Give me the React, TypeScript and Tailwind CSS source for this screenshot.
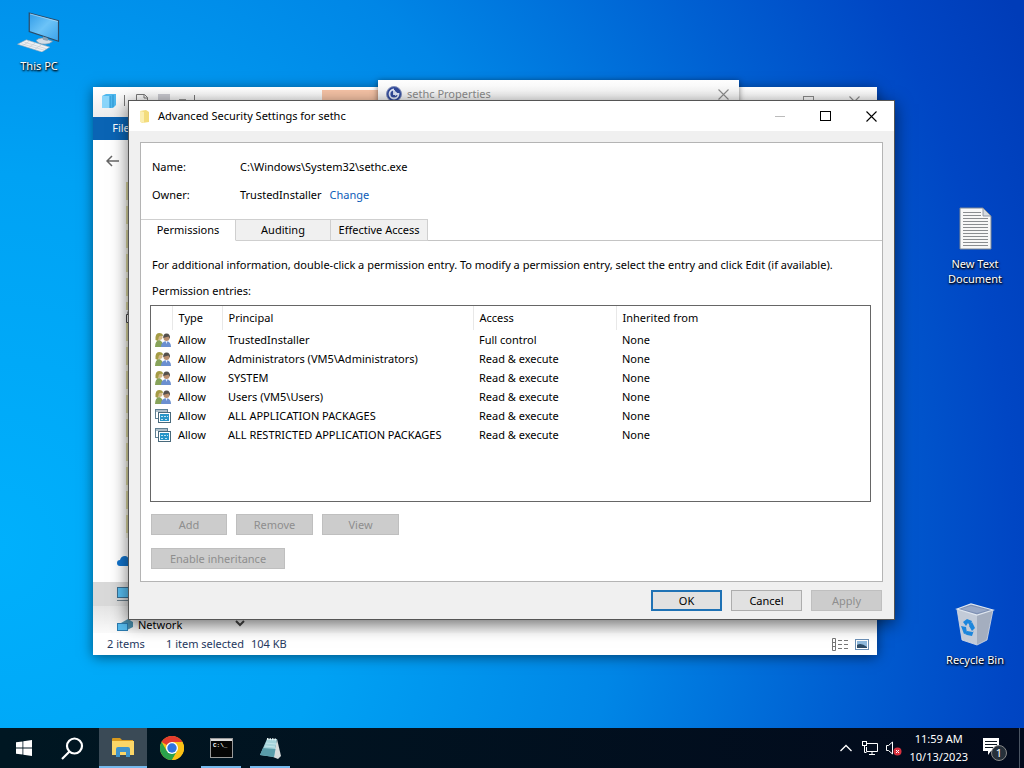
import { ReactNode, useState } from 'react';
import clsx from 'clsx';

type Entry = {
  kind: 'group' | 'package';
  type: string;
  principal: string;
  access: string;
  inherited: string;
};

const entries: Entry[] = [
  { kind: 'group', type: 'Allow', principal: 'TrustedInstaller', access: 'Full control', inherited: 'None' },
  { kind: 'group', type: 'Allow', principal: 'Administrators (VM5\\Administrators)', access: 'Read & execute', inherited: 'None' },
  { kind: 'group', type: 'Allow', principal: 'SYSTEM', access: 'Read & execute', inherited: 'None' },
  { kind: 'group', type: 'Allow', principal: 'Users (VM5\\Users)', access: 'Read & execute', inherited: 'None' },
  { kind: 'package', type: 'Allow', principal: 'ALL APPLICATION PACKAGES', access: 'Read & execute', inherited: 'None' },
  { kind: 'package', type: 'Allow', principal: 'ALL RESTRICTED APPLICATION PACKAGES', access: 'Read & execute', inherited: 'None' },
];

const tabs = [
  { name: 'Permissions', width: 'w-[95px]' },
  { name: 'Auditing', width: 'w-[95px]' },
  { name: 'Effective Access', width: 'w-[97px]' },
];

/* ---------- icons ---------- */

const PcIcon = () => (
  <svg width="44" height="40" viewBox="0 0 44 41">
    <defs>
      <linearGradient id="pcScreen" x1="0" y1="0" x2="1" y2="1">
        <stop offset="0" stopColor="#2f9be8" />
        <stop offset="0.5" stopColor="#6cc3f7" />
        <stop offset="1" stopColor="#3aa2ea" />
      </linearGradient>
    </defs>
    <path d="M12 1 42 9v21L12 20Z" fill="url(#pcScreen)" stroke="#2c4a66" strokeWidth="1.2" />
    <path d="M12.8 2 41.4 9.7" stroke="#b9e2fb" strokeWidth="0.7" />
    <path d="M19 29q5-4 11-1l6 2q-3 3-8 3-7 0-9-4Z" fill="#d3dde6" stroke="#7390a8" strokeWidth="0.7" />
    <path d="m26 25 5 1.600v3l-5-1.200Z" fill="#8aa2b5" />
    <path d="M0 33 9 28.500l24 7.500-8 5Z" fill="#eef1f4" stroke="#9aa9b6" strokeWidth="0.6" />
    <path d="m4 32.500 23 6.500M7 31l22 6.500M12 30l-6 4M18 32l-6 4M24 34l-6 4" stroke="#bcc5cd" strokeWidth="0.6" fill="none" />
  </svg>
);

const TextFileIcon = () => (
  <svg width="33" height="43" viewBox="0 0 33 43">
    <path d="M1 1h23l8 8v33H1Z" fill="#f7f7f7" stroke="#7d8794" />
    <path d="M24 1v8h8Z" fill="#d5dae0" stroke="#7d8794" strokeWidth="0.8" />
    <path
      d="M4 5.500h18M4 8.500h18M4 11.500h25M4 14.500h25M4 17.500h25M4 20.500h25M4 23.500h25M4 26.500h25M4 29.500h25M4 32.500h25M4 35.500h25M4 38.500h25"
      stroke="#8a8d90"
    />
  </svg>
);

const RecycleIcon = () => (
  <svg width="40" height="43" viewBox="0 0 40 43">
    <path d="m2 6 5 31 15 5V11Z" fill="#c3cbd8" />
    <path d="M22 11v31l10-5 6-30Z" fill="#a4aebf" />
    <path d="m2 6 14-5 22 6-16 5Z" fill="#7f91b4" stroke="#dfe6ef" strokeWidth="1.2" />
    <path d="m6 6 10-3 17 4-11 3Z" fill="#98a8c6" />
    <g fill="#1c86dc">
      <path d="m8 19 4-3 5 2-2 5-2-3-2 3Z" />
      <path d="m17 19 3 6-3 3-3-5Z" />
      <path d="m6 23 5 1 1 6-3 1Z" />
      <path d="m12 28 6 1 1-2-2 6-5-1-2-1Z" />
    </g>
    <path d="m2 6 5 31 15 5 10-5 6-30" fill="none" stroke="#d5dce6" strokeWidth="0.8" />
  </svg>
);

const GroupIcon = () => (
  <svg width="16" height="16" viewBox="0 0 16 16" className="block">
    <path d="M0 15q0-6 4-7 4 1 4.500 7Z" fill="#87a35a" />
    <circle cx="4.500" cy="5" r="3" fill="#d4b988" />
    <path d="M.5 8Q0 1 4 1t4 3Q5 3 3.800 5L3 9Z" fill="#a59c45" />
    <path d="M6 15q0-5 5-6 5 .5 5 6Z" fill="#6b8fd0" />
    <circle cx="11.500" cy="6" r="3" fill="#b98f70" />
    <path d="M8.200 6Q8 1.500 11.500 1.500 15.500 1.500 15 7l-1.500-2.500q-3 .5-5.300 1.500Z" fill="#54504c" />
    <path d="m10.500 9 1 3 1-3" fill="#e8eefa" />
  </svg>
);

const PackageIcon = () => (
  <svg width="16" height="16" viewBox="0 0 16 16" className="block">
    <rect x="0.500" y="1.500" width="12" height="9" fill="#fff" stroke="#5e7f92" />
    <path d="M1 3h11" stroke="#5e7f92" />
    <rect x="3.500" y="4.500" width="12" height="10" fill="#fff" stroke="#49697b" />
    <rect x="5" y="6" width="9" height="7" fill="#2795c8" />
    <path d="M6 8.500h7M6 11.500h3M10 11.500h3" stroke="#bfe4f4" strokeDasharray="2 1" />
  </svg>
);

const FolderIcon = () => (
  <svg width="9" height="13" viewBox="0 0 9 13">
    <path d="M0 1 6 0l3 2v10l-7 1-2-2Z" fill="#f3dc7c" />
    <path d="m0 1 4 1v11l-4-1Z" fill="#fbeeb0" />
  </svg>
);

const CloseIcon = () => (
  <svg width="11" height="11" viewBox="0 0 11 11">
    <path d="m.5.5 10 10M10.500.5l-10 10" stroke="currentColor" strokeWidth="1.100" />
  </svg>
);

const MaximizeIcon = () => (
  <svg width="11" height="11" viewBox="0 0 11 11">
    <rect x="0.500" y="0.500" width="10" height="9" fill="none" stroke="currentColor" />
  </svg>
);

const ChromeIcon = () => (
  <svg width="24" height="24" viewBox="0 0 24 24">
    <circle cx="12" cy="12" r="12" fill="#fbc116" />
    <path d="M12 12 1.600 6A12 12 0 0 1 22.400 6H12Z" fill="#e33b2e" />
    <path d="M1.600 6A12 12 0 0 0 12 24l5.200-9L12 12 6.800 15Z" fill="#2ba24c" />
    <path d="M12 6h10.400A12 12 0 0 1 12 24l5.200-9Z" fill="#fbc116" />
    <circle cx="12" cy="12" r="6" fill="#fff" />
    <circle cx="12" cy="12" r="4.700" fill="#2e74e0" />
  </svg>
);

/* ---------- desktop ---------- */

const Shortcut = ({ label, className, children }: { label: string; className: string; children: ReactNode }) => (
  <button
    className={clsx(
      'absolute flex w-[76px] flex-col items-center gap-1.5 leading-[15px] text-white [text-shadow:0_1px_2px_#000,1px_1px_2px_#000]',
      className
    )}
  >
    {children}
    <span>{label}</span>
  </button>
);

const Explorer = () => (
  <section className="absolute top-[87px] right-[147px] bottom-[73px] left-[93px] flex flex-col overflow-hidden bg-white shadow-[0_2px_12px_rgba(0,0,0,0.5)]">
    <header className="flex h-[30px] shrink-0 items-start bg-linear-to-b from-white to-[#ececec] pl-2 text-[#8a8a8a]">
      <svg width="16" height="16" viewBox="0 0 16 16" className="mt-1.5">
        <path d="m1 3 4-2h10v11l-3 3H1Z" fill="#4fb8ee" />
        <path d="M1 3h8v12H1Z" fill="#8ad5fa" />
        <path d="M9 3v12M12 2v12" stroke="#2b93d0" />
      </svg>
      <svg width="80" height="20" viewBox="0 0 80 20" className="ml-[7px]" fill="none">
        <path d="M.5 8v11M70.500 8v11" stroke="#777" />
        <path d="M12.500 19V7.500h8l3 3V19M20 7.500V11h4" stroke="#777" />
        <rect x="34" y="7" width="12" height="10" fill="#c9c9cf" />
        <path d="M55 13.500h7" stroke="#333" strokeWidth="2" />
      </svg>
      <div className="mt-[3px] ml-[118px] h-[27px] w-20 bg-[#f6c3a6]" />
      <div className="mt-[9px] mr-[17px] ml-auto flex gap-[35px]">
        <button aria-label="Maximize folder window"><MaximizeIcon /></button>
        <button aria-label="Close folder window"><CloseIcon /></button>
      </div>
    </header>
    <nav className="flex h-[23px] shrink-0 items-center">
      <button className="h-full w-14 bg-[#0a64b4] text-white">File</button>
    </nav>
    <div className="flex h-[42px] shrink-0 items-center pl-[13px]">
      <button aria-label="Back">
        <svg width="13" height="12" viewBox="0 0 13 12" fill="none" stroke="#666" strokeWidth="1.500">
          <path d="M6 1 1 6l5 5M1 6h12" />
        </svg>
      </button>
    </div>
    <div className="flex min-h-0 flex-1 flex-col justify-end overflow-hidden">
      <div className="ml-[33px] h-32 w-1 bg-[repeating-linear-gradient(#d9d5a0_0_18px,#f4f2e0_18px_24px)]" />
      <svg width="10" height="13" viewBox="0 0 10 13" className="ml-8" fill="none" stroke="#444">
        <path d="M1.500 4.500h7v8h-7ZM3 4V1.500h4V4" />
      </svg>
      <div className="ml-[33px] w-1 flex-1 bg-[repeating-linear-gradient(#d9d5a0_0_18px,#f4f2e0_18px_24px)]" />
      <div className="flex h-11 items-center pl-6">
        <svg width="16" height="11" viewBox="0 0 16 11">
          <path d="M3 11a3 3 0 0 1 0-6q1-4 5-4 3 0 4 4 4 0 4 3t-3 3Z" fill="#1173cc" />
        </svg>
      </div>
      <div className="flex h-6 items-center bg-[#d9d9d9] pl-6">
        <svg width="16" height="15" viewBox="0 0 16 15">
          <rect x="0.500" y="0.500" width="15" height="10" fill="#58bdf0" stroke="#3c6f90" />
          <path d="M0 13.500h16" stroke="#6b7d89" />
        </svg>
      </div>
      <div className="flex h-[27px] items-end bg-linear-to-b from-[#e4e4e4] to-[#fafafa] pl-6 leading-4">
        <svg width="16" height="14" viewBox="0 0 16 14" className="mr-[5px]">
          <path d="m4 4 7-4 5 3v5l-6 3Z" fill="#4a8fae" />
          <rect x="0.500" y="4.500" width="10" height="7" fill="#58bdf0" stroke="#2a7bb0" />
        </svg>
        <span className="w-[97px]">Network</span>
        <svg width="10" height="16" viewBox="0 0 10 16" fill="none" stroke="#444" strokeWidth="2">
          <path d="m1 4 4 4 4-4" />
        </svg>
      </div>
    </div>
    <footer className="flex h-[22px] shrink-0 items-center pr-2 pl-3.5 text-[#26385e]">
      <span className="w-[59px]">2 items</span>
      <span className="w-[85px]">1 item selected</span>
      <span>104 KB</span>
      <button aria-label="Details view" className="mr-[7px] ml-auto">
        <svg width="16" height="13" viewBox="0 0 16 13" fill="none" stroke="#777">
          <path d="M.5.5h3v12h-3ZM.5 4.500h3M.5 8.500h3M6 2.500h4M12 2.500h4M6 6.500h4M12 6.500h4M6 10.500h4M12 10.500h4" />
        </svg>
      </button>
      <button aria-label="Thumbnail view">
        <svg width="14" height="11" viewBox="0 0 14 11">
          <rect x="0.500" y="0.500" width="13" height="10" fill="#fff" stroke="#6a8fb5" />
          <rect x="2" y="2" width="10" height="7" fill="#8fb9dc" />
          <path d="M2 6q4-3 10 2v1H2Z" fill="#2d4b66" />
        </svg>
      </button>
    </footer>
  </section>
);

const Properties = () => (
  <section className="absolute top-20 right-[285px] left-[378px] h-64 bg-linear-to-b from-white to-[#ececec] to-10% shadow-[0_1px_6px_rgba(0,0,0,0.5)]">
    <header className="flex items-center gap-[5px] pt-1.5 pr-2.5 pl-2 text-[#8b8b8b]">
      <svg width="16" height="16" viewBox="0 0 16 16">
        <circle cx="8" cy="8" r="7.500" fill="#314a9b" stroke="#8492bd" />
        <path d="M8 3.500a4.500 4.500 0 1 0 4.500 4.500H8V4" fill="none" stroke="#dfe6f7" strokeWidth="1.800" />
        <path d="m9 5 3.500 3-3.500 2Z" fill="#dfe6f7" />
      </svg>
      <h2>sethc Properties</h2>
      <button aria-label="Close properties" className="ml-auto"><CloseIcon /></button>
    </header>
  </section>
);

/* ---------- dialog ---------- */

const PushButton = ({ children, className, disabled }: { children: ReactNode; className: string; disabled?: boolean }) => (
  <button
    disabled={disabled}
    className={clsx(
      'h-[21px] leading-4',
      disabled ? 'border border-[#bfbfbf] bg-[#cccccc] text-[#8e8e8e]' : 'bg-[#e1e1e1]',
      className
    )}
  >
    {children}
  </button>
);

const SecurityDialog = () => {
  const [tab, setTab] = useState('Permissions');

  return (
    <section className="absolute top-[100px] right-[129px] left-32 border border-[#555] bg-[#f0f0f0] shadow-[0_4px_16px_rgba(0,0,0,0.55)]">
      <header className="flex h-[30px] items-center bg-white pr-[17px] pl-[11px]">
        <FolderIcon />
        <h1 className="ml-[9px]">Advanced Security Settings for sethc</h1>
        <div className="ml-auto flex items-center gap-[35px]">
          <button aria-label="Minimize" disabled className="h-px w-2.5 bg-[#bbb]" />
          <button aria-label="Maximize"><MaximizeIcon /></button>
          <button aria-label="Close"><CloseIcon /></button>
        </div>
      </header>

      <div className="mx-[11px] mt-[11px] border border-[#b4b4b4] bg-white pb-3">
        <dl className="grid grid-cols-[88px_1fr] gap-y-3 pt-4 pl-[11px] leading-4">
          <dt>Name:</dt>
          <dd>C:\Windows\System32\sethc.exe</dd>
          <dt>Owner:</dt>
          <dd>
            TrustedInstaller
            <a href="#change" className="ml-2 text-[#0b5cb8]">Change</a>
          </dd>
        </dl>

        <div role="tablist" className="mt-4 flex h-[22px] border-b border-[#c4c4c4]">
          {tabs.map(({ name, width }) => (
            <button
              key={name}
              role="tab"
              aria-selected={tab === name}
              onClick={() => setTab(name)}
              className={clsx(
                'h-[22px] border-t border-r border-b border-[#cfcfcf] leading-4 whitespace-nowrap',
                width,
                tab === name ? 'border-b-white bg-white' : 'bg-[#f0f0f0]'
              )}
            >
              {name}
            </button>
          ))}
        </div>

        <div className="pr-[11px] pl-[9px]">
          <p className="mt-4 pl-0.5 leading-4">
            For additional information, double-click a permission entry. To modify a permission entry, select the entry
            and click Edit (if available).
          </p>
          <p id="entries-label" className="mt-2.5 pl-0.5 leading-4">Permission entries:</p>

          <div className="mt-1.5 h-[197px] border border-[#666]">
            <table aria-labelledby="entries-label" className="w-full table-fixed text-left">
              <colgroup>
                <col className="w-[21px]" />
                <col className="w-[50px]" />
                <col className="w-[251px]" />
                <col className="w-[143px]" />
                <col />
              </colgroup>
              <thead>
                <tr className="h-6 [&>th]:border-r [&>th]:border-[#e8e8e8] [&>th]:pl-1.5 [&>th]:font-normal [&>th:last-child]:border-r-0">
                  <th aria-label="Icon" />
                  <th>Type</th>
                  <th>Principal</th>
                  <th>Access</th>
                  <th>Inherited from</th>
                </tr>
              </thead>
              <tbody>
                {entries.map((entry) => (
                  <tr key={entry.principal} className="h-[19px] leading-4 whitespace-nowrap">
                    <td className="pl-1">{entry.kind === 'group' ? <GroupIcon /> : <PackageIcon />}</td>
                    <td className="pl-1.5">{entry.type}</td>
                    <td className="pl-1.5">{entry.principal}</td>
                    <td className="pl-1.5">{entry.access}</td>
                    <td className="pl-1.5">{entry.inherited}</td>
                  </tr>
                ))}
              </tbody>
            </table>
          </div>

          <div className="mt-3 flex gap-[9px] pl-px">
            <PushButton disabled className="w-[76px]">Add</PushButton>
            <PushButton disabled className="w-[77px]">Remove</PushButton>
            <PushButton disabled className="w-[77px]">View</PushButton>
          </div>
          <div className="mt-[13px] flex pl-px">
            <PushButton disabled className="w-[134px]">Enable inheritance</PushButton>
          </div>
        </div>
      </div>

      <footer className="flex justify-end gap-[9px] pt-2 pr-3 pb-2">
        <PushButton className="w-[71px] border-2 border-[#1f72b5]">OK</PushButton>
        <PushButton className="w-[71px] border border-[#adadad]">Cancel</PushButton>
        <PushButton disabled className="w-[71px]">Apply</PushButton>
      </footer>
    </section>
  );
};

/* ---------- taskbar ---------- */

const Taskbar = () => (
  <footer className="flex h-10 shrink-0 items-stretch bg-linear-to-r from-[#001722] to-[#020a1c] text-white">
    <button aria-label="Start" className="flex w-12 items-center justify-center">
      <svg width="16" height="16" viewBox="0 0 16 16" fill="#fff">
        <path d="m0 2.300 6.500-.9v6.200H0ZM7.300 1.300 16 0v7.600H7.300ZM0 8.400h6.500v6.200L0 13.700ZM7.300 8.400H16V16l-8.700-1.300Z" />
      </svg>
    </button>
    <button aria-label="Search" className="mr-[3px] flex w-12 items-center justify-center">
      <svg width="23" height="23" viewBox="0 0 23 23" fill="none" stroke="#fff" strokeWidth="2.200">
        <circle cx="13.500" cy="9" r="7.500" />
        <path d="m8.500 14.500-7.500 7.500" />
      </svg>
    </button>
    <button aria-label="File Explorer" className="flex w-12 items-center justify-center border-b-2 border-[#76b9ed] bg-[#3a4a56]">
      <svg width="22" height="20" viewBox="0 0 22 20">
        <path d="M0 2q0-1 1-1h7l2 2h11v5H0Z" fill="#d99a1e" />
        <path d="M0 4h22v14H0Z" fill="#fbd667" />
        <path d="M4 20v-8q0-2 2-2h10q2 0 2 2v8h-4v-5H8v5Z" fill="#3f93cb" />
      </svg>
    </button>
    <button aria-label="Chrome" className="ml-px flex w-12 items-center justify-center">
      <ChromeIcon />
    </button>
    <button aria-label="Command Prompt" className="mt-0.5 mr-1 ml-[5px] flex w-10 items-center justify-center border-b-2 border-[#76b9ed]">
      <svg width="23" height="20" viewBox="0 0 23 20">
        <rect x="0.500" y="0.500" width="22" height="19" fill="#050505" stroke="#9a9a9a" />
        <path d="M1 2h21" stroke="#dcdcdc" strokeWidth="2" />
        <text x="3" y="9" fontSize="6" fontWeight="bold" fill="#fff" fontFamily="Liberation Mono, monospace">C:\_</text>
      </svg>
    </button>
    <button aria-label="Notepad" className="mt-0.5 ml-[5px] flex w-10 items-center justify-center border-b-2 border-[#76b9ed]">
      <svg width="23" height="22" viewBox="0 0 23 22">
        <path d="m18 2 4 17-3 3-5-2Z" fill="#d9dcdc" />
        <path d="M8 2h10l-3 18-14-2Z" fill="#a5d3da" />
        <path d="M4 11 16.500 12 15 20 1 18Z" fill="#5a9daa" />
        <path d="m8 2 10 .5" stroke="#e9f4f5" strokeWidth="2" strokeDasharray="1.500 1" />
        <path d="m7 6 10 1M6 9l10 1" stroke="#c9e8ee" strokeWidth="0.800" />
      </svg>
    </button>

    <div className="ml-auto flex items-center">
      <button aria-label="Show hidden icons" className="mr-2.5">
        <svg width="12" height="8" viewBox="0 0 12 8" fill="none" stroke="#fff" strokeWidth="1.300">
          <path d="m.5 7 5.500-5.500L11.500 7" />
        </svg>
      </button>
      <button aria-label="Network status" className="mr-2">
        <svg width="16" height="14" viewBox="0 0 16 14" fill="none" stroke="#fff">
          <path d="M5 2.500h10.500v8H4.500V6M10 10.500v3M7 13.500h6" />
          <rect x="0.500" y="0.500" width="4" height="4" />
          <path d="M2.500 5v6.500h2" />
        </svg>
      </button>
      <button aria-label="Volume muted" className="mr-[7px]">
        <svg width="16" height="15" viewBox="0 0 16 15">
          <path d="M.5 4.500h2L6.500 1v12l-4-3.500h-2Z" fill="none" stroke="#fff" />
          <circle cx="11.500" cy="10.500" r="4" fill="#d9303e" />
          <path d="m10 9 3 3m0-3-3 3" stroke="#fff" />
        </svg>
      </button>
      <time dateTime="2023-10-13T11:59" className="text-center leading-[18px]">
        11:59 AM
        <br />
        10/13/2023
      </time>
      <button aria-label="Notifications" className="relative mr-3 ml-3.5">
        <svg width="25" height="26" viewBox="0 0 25 26">
          <path d="M1 3h16v13H9l-3 4v-4H1Z" fill="#fff" />
          <path d="M3 6.500h12M3 9.500h12M3 12.500h8" stroke="#0b1620" />
        </svg>
        <span className="absolute right-0 bottom-0 flex size-4 items-center justify-center rounded-full border border-[#888] bg-[#26303a]">
          1
        </span>
      </button>
      <div className="mr-1 h-10 w-px bg-[#4b5563]" />
    </div>
  </footer>
);

const App = () => (
  <div className="flex min-h-screen flex-col bg-[#0040c4] font-['Noto_Sans','Open_Sans',sans-serif] text-[11px] text-black">
    <main className="relative flex-1 bg-[radial-gradient(ellipse_110%_170%_at_0%_75%,#00b0fc_0%,#00a2f4_30%,#0086e6_55%,#0060d2_75%,#0046c4_90%,#003cb8_100%)]">
      <Shortcut label="This PC" className="top-3 left-[1px]"><PcIcon /></Shortcut>
      <Shortcut label="New Text Document" className="top-[207px] right-[11px]"><TextFileIcon /></Shortcut>
      <Shortcut label="Recycle Bin" className="top-[603px] right-[11px]"><RecycleIcon /></Shortcut>
      <Explorer />
      <Properties />
      <SecurityDialog />
    </main>
    <Taskbar />
  </div>
);

export default App;
